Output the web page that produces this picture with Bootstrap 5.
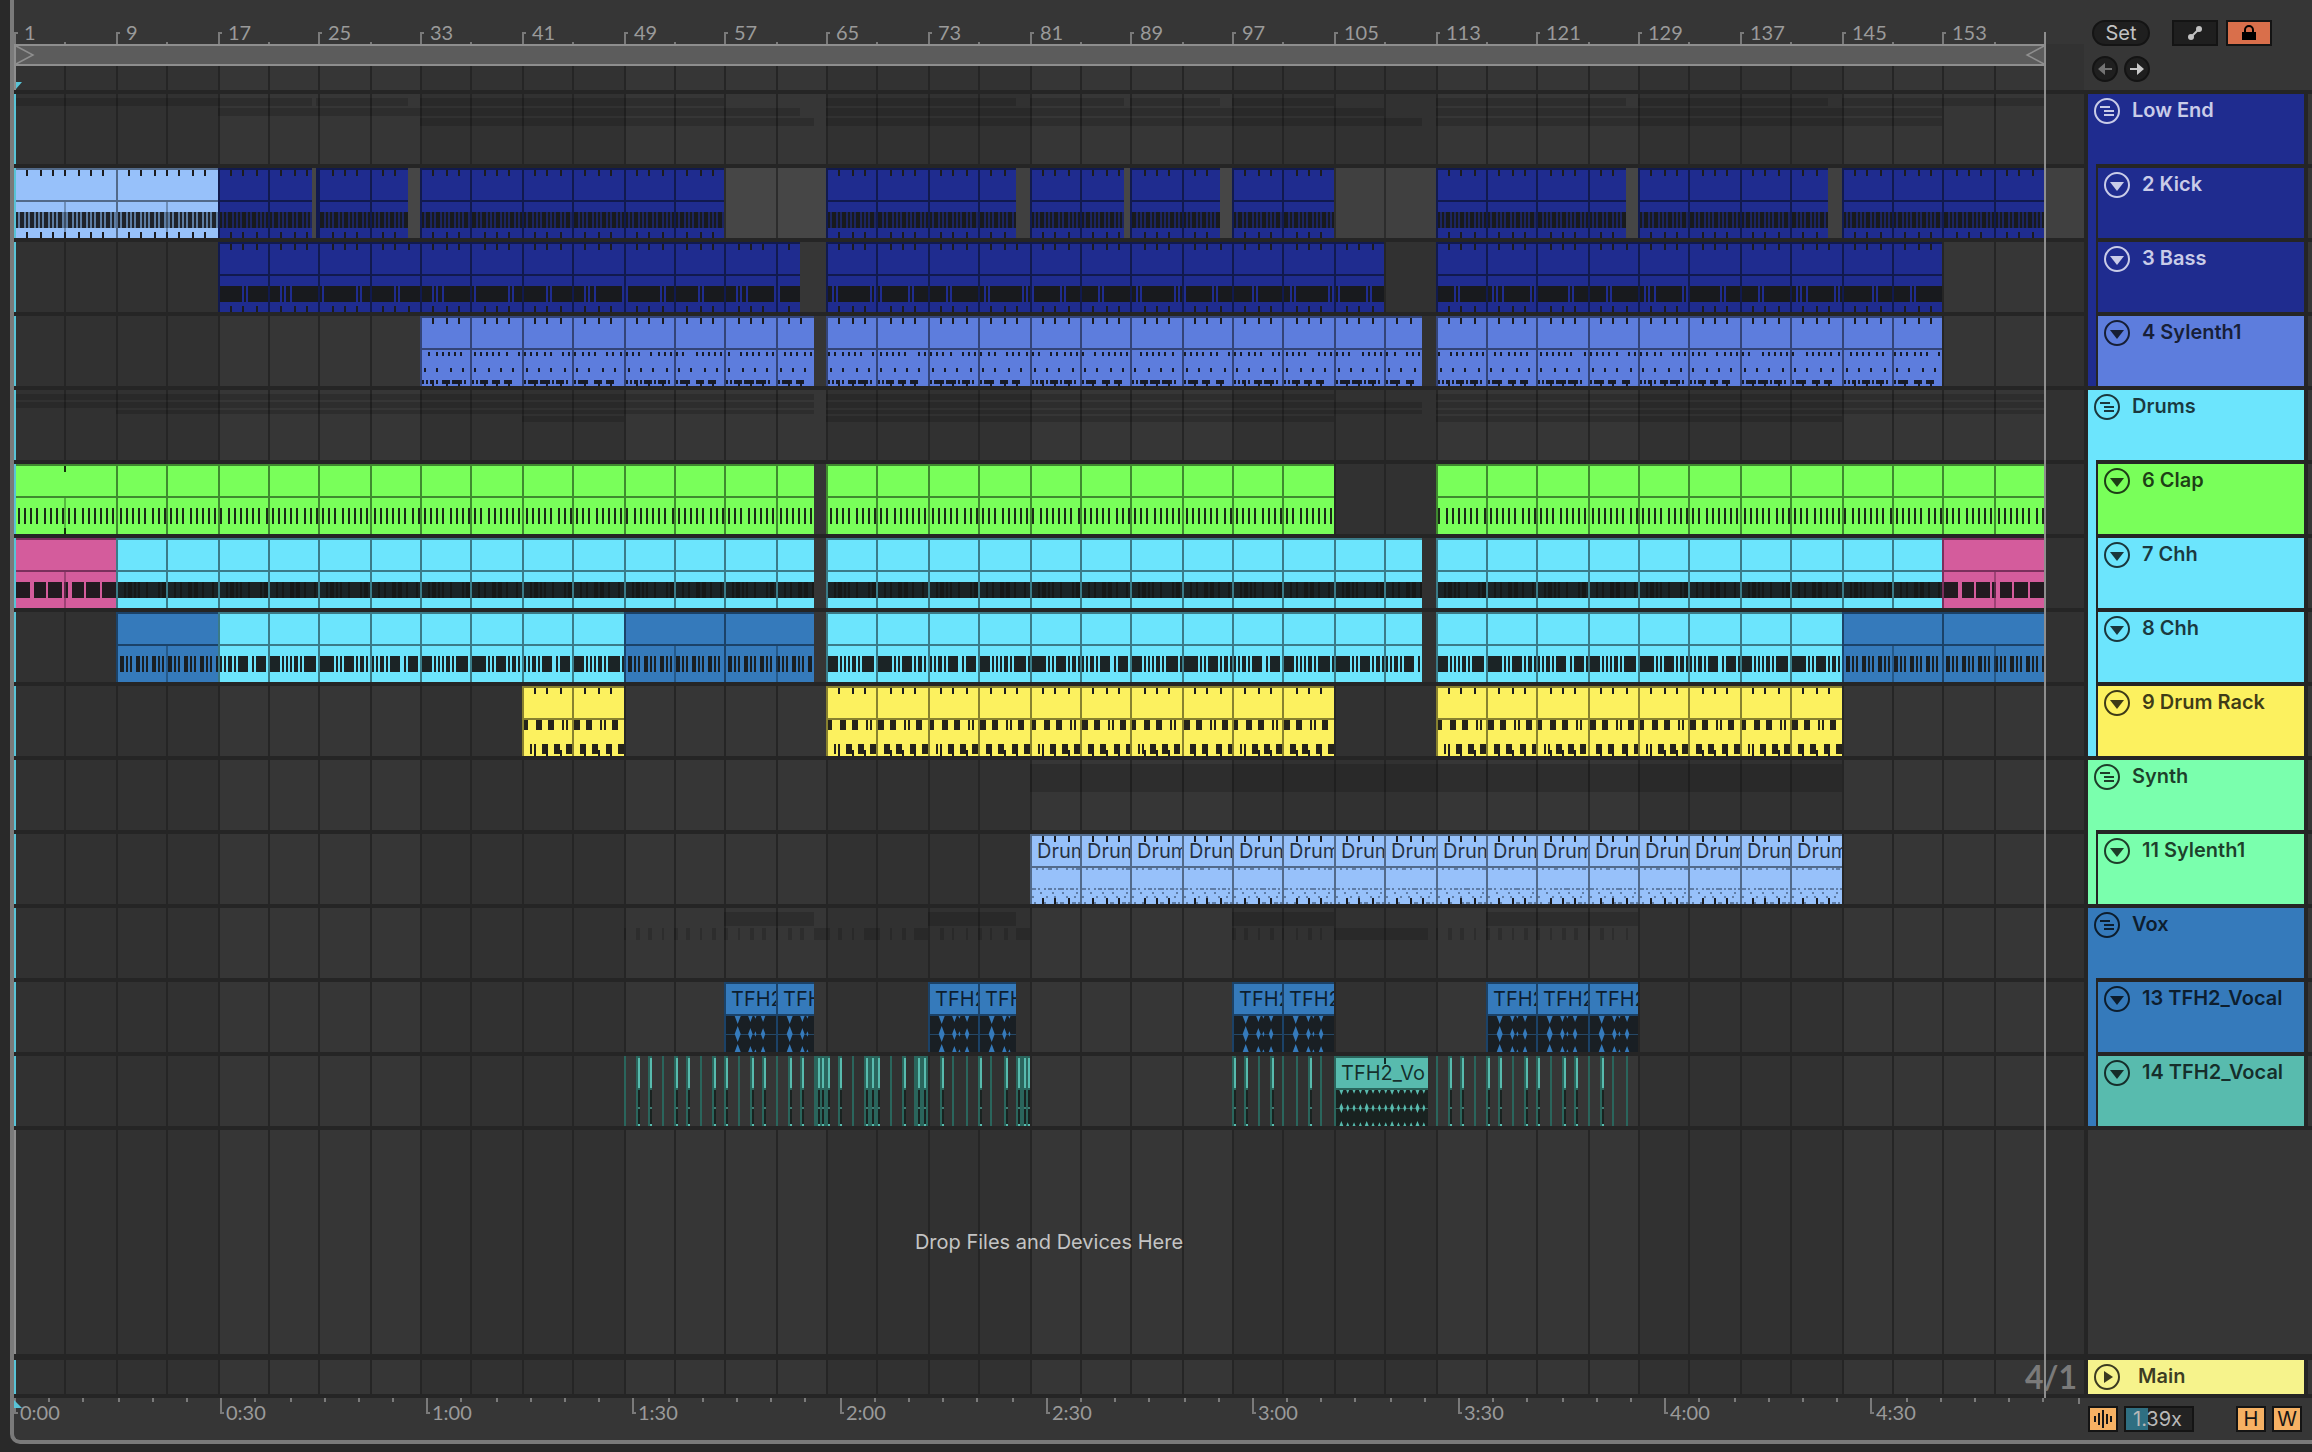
<!DOCTYPE html>
<html lang="en">
<head>
<meta charset="utf-8">
<meta name="viewport" content="width=device-width, initial-scale=1">
<title>Arrangement</title>
<link href="https://cdn.jsdelivr.net/npm/bootstrap@5.3.0/dist/css/bootstrap.min.css" rel="stylesheet">
<style>
  :root { --line:#252525; --panel:#363636; --edge:#7a7a7a; --cyan:#58c3d6; }
  body { background:#292929; color:#9a9a9a; font:400 20px/24px Inter, "Open Sans", sans-serif; }
  svg { display:block; }
  .frame { margin:0 0 8px 10px; min-height:calc(100vh - 8px); border-left:4px solid var(--edge); border-bottom:4px solid var(--edge); border-bottom-left-radius:10px; background:var(--panel); }
  .side { width:228px; flex:none; }
  .topbar { height:90px; }
  .topright { padding-right:40px; }
  .arrows { gap:6px; margin-top:10px; }
  .lane svg, .ruler svg { width:100%; height:100%; }
  .lane { height:70px; margin-bottom:4px; overflow:hidden; }
  .tracks { background:var(--line); padding-top:4px; }
  .lanes { min-width:0; }
  .drop { min-height:120px; background:var(--line); }
  .dropside { background:var(--panel); border-left:4px solid var(--line); }
  .drop-hint { inset:0 228px 0 0; color:#c4c4c4; }
  .cliptext { top:5px; height:24px; overflow:hidden; white-space:nowrap; padding-left:5px; }
  .rulertext, .timetext { font-family:Lato, sans-serif; }
  .rulertext { top:20px; }
  .timetext { top:2px; }
  .group-fill { margin-bottom:4px; }
  .head { height:70px; padding:4px; gap:12px; font-weight:600; }
  .kids { margin-left:8px; padding:4px 0 0 2px; background:var(--line); display:flex; flex-direction:column; gap:4px; }
  .heads { padding-left:4px; }
  .strip { width:8px; border-left:4px solid var(--line); background:repeating-linear-gradient(var(--panel) 0 70px, var(--line) 70px 74px); }
  .fold { width:26px; height:26px; padding:0; border:0; background:none; color:inherit; flex:none; margin-left:2px; }
  .on-dark { color:#c9cce8; } .on-light { color:rgba(0,0,0,.76); }
  .c-navy { background:#1f2c8f; } .c-peri { background:#5d7ddd; } .c-cyan { background:#6ce5fd; } .c-green { background:#79ff5a; }
  .c-yellow { background:#fcf15f; } .c-mint { background:#7affad; } .c-blue { background:#357abb; } .c-teal { background:#58bbae; } .c-main { background:#f6f38c; }
  .tool { height:26px; padding:0; border:2px solid #141414; background:#1f1f1f; color:#c2c2c2; display:flex; align-items:center; justify-content:center; line-height:20px; }
  .tool-set { width:58px; border-radius:13px; }
  .tool-wide { width:46px; } .tool-round { width:26px; border-radius:13px; } .tool-sq { width:30px; }
  .tool-lock { background:#d96f4b; color:#000; } .tool-on { background:#f6b163; color:#161616; }
  .zoomval { width:70px; height:26px; margin-left:6px; padding:0 0 0 7px; border:2px solid #141414; border-radius:0; color:#b8b8b8; line-height:20px; background:linear-gradient(90deg,#2f6f82 22px,#232323 22px); }
  .tool-last { margin:0 10px 0 6px; }
  .mainwrap { background:var(--line); padding:6px 0 4px; }
  .mainrow { height:34px; }
  .signature { right:7px; top:3px; font:700 32px/28px Lato, sans-serif; color:#7a7a7a; }
  .head-main { height:34px; gap:18px; }
  .timebar { height:42px; }
  .endline { width:2px; right:266px; top:32px; bottom:42px; background:#8e8e8e; }
</style>
</head>
<body>
<main class="frame d-flex flex-column position-relative">
  <header class="topbar d-flex">
    <div class="ruler flex-fill position-relative" id="ruler"></div>
    <div class="side ps-2 pt-1">
      <div class="d-flex mt-3 topright">
        <button class="tool tool-set">Set</button>
        <button class="tool tool-wide ms-auto" aria-label="Automation mode"><svg width="16" height="16" viewBox="0 0 16 16"><path d="M3 13 13 3" stroke="currentColor" stroke-width="2"/><circle cx="4" cy="12" r="3" fill="currentColor"/><circle cx="12" cy="4" r="3" fill="currentColor"/></svg></button>
        <button class="tool tool-wide tool-lock ms-2" aria-label="Lock envelopes"><svg width="14" height="16" viewBox="0 0 14 16"><path d="M3 8V5a4 4 0 0 1 8 0v3" fill="none" stroke="#000" stroke-width="2"/><path d="M0 7h14v8H0z"/></svg></button>
      </div>
      <div class="d-flex arrows">
        <button class="tool tool-round" aria-label="Previous locator"><svg width="16" height="14" viewBox="0 0 16 14"><path d="M1 7 8 1v5h7v2H8v5z" fill="#737373"/></svg></button>
        <button class="tool tool-round" aria-label="Next locator"><svg width="16" height="14" viewBox="0 0 16 14"><path d="M15 7 8 1v5H1v2h7v5z" fill="#c8c8c8"/></svg></button>
      </div>
    </div>
  </header>

  <section class="tracks d-flex">
    <div class="lanes flex-fill" id="lanes"></div>
    <div class="side heads d-flex">
      <div class="flex-fill" id="heads"></div>
      <div class="strip"></div>
    </div>
  </section>

  <section class="drop d-flex flex-fill position-relative">
    <div class="flex-fill position-relative lanes" id="drop"></div>
    <div class="side dropside"></div>
    <div class="drop-hint position-absolute d-flex align-items-center justify-content-center">Drop Files and Devices Here</div>
  </section>

  <section class="d-flex mainwrap">
    <div class="mainrow flex-fill position-relative lanes" id="mainlane"></div>
    <div class="side heads d-flex mainrow">
      <div class="head head-main flex-fill d-flex c-main on-light">
        <button class="fold" aria-label="Unfold main track"><svg width="26" height="26" viewBox="0 0 26 26"><circle cx="13" cy="13" r="12" fill="none" stroke="currentColor" stroke-width="2"/><path d="M10 7v12l9-6z" fill="currentColor"/></svg></button>
        <span>Main</span>
      </div>
      <div class="strip"></div>
    </div>
  </section>

  <footer class="timebar d-flex">
    <div class="ruler flex-fill position-relative" id="times"></div>
    <div class="side heads d-flex pt-2">
      <button class="tool tool-sq tool-on" aria-label="Show waveform"><svg width="20" height="20" viewBox="0 0 20 20"><path d="M2 7v6M6 4v12M10 1v18M14 5v10M18 7v6" stroke="#161616" stroke-width="2"/></svg></button>
      <input class="zoomval" type="text" value="1.39x" aria-label="Zoom">
      <button class="tool tool-sq tool-on ms-auto">H</button>
      <button class="tool tool-sq tool-on tool-last">W</button>
    </div>
  </footer>
  <div class="position-absolute endline"></div>
</main>
<script src="https://cdn.jsdelivr.net/npm/bootstrap@5.3.0/dist/js/bootstrap.bundle.min.js"></script>
<script>
const BARS = 160, TAIL = 40;
let laneW, barW;
const snap = v => 2 * Math.round(v / 2);
const X = b => snap((b - 1) * barW);
const R = (x, y, w, h, f, o) => `<rect x="${x}" y="${y}" width="${w}" height="${h}" fill="${f}"${o ? ` opacity="${o}"` : ''}/>`;
const svg = s => `<svg shape-rendering="crispEdges" aria-hidden="true">${s}</svg>`;

// fill, border, note
const C = {
  sky:['#97c1fa','#526a8a','#1f242c'], navy:['#1f2c8f','#111a4e','#181a1e'], peri:['#5d7ddd','#334478','#181c28'],
  green:['#79ff5a','#3f8a2f','#1b2a17'], cyan:['#6ce5fd','#3a7b88','#1b2426'], pink:['#d45c9c','#7a2f5c','#221a20'],
  blue:['#357abb','#1b4268','#191f24'], yellow:['#fcf15f','#88812f','#25231a'], teal:['#58bbae','#2a655c','#192220']
};
// consecutive clips of a fixed length between two bars
const run = (from, to, step, c, label) => {
  const out = [];
  for (let b = from; b < to; b += step) out.push({ a:b, b:Math.min(b + step, to), c, label });
  return out;
};

// vocal chops, one letter per bar: d = hairline, p = short slice, A-D = clusters
const chops = (s, from) => [...s].map((k, i) => ({ k, a: from + i })).filter(t => t.k !== '.');
const BLOCK = { A:[16,[4,8,14]], B:[16,[2,8,14]], C:[14,[4,10]], D:[14,[2,8,12]] };
const CHOPS = [...chops('dppdppdppdppdppA.pdB.dpC.pddpdpD', 49), ...chops('ppdpddpd', 97), ...chops('dppdppdppdppdpdd', 113)];

const GROUPS = [
  { name:'Low End', cls:'c-navy on-dark', rows:[[4,8],[14,8],[24,8]], kids:[
    { name:'2 Kick', cls:'c-navy on-dark', kind:'kick', hot:true, ticks:3, clips:[...run(1,17,8,'sky'), ...run(17,24.5,4,'navy'), {a:24.85,b:25,c:'navy'}, ...run(25,32,4,'navy'), ...run(33,57,4,'navy'), ...run(65,80,4,'navy'), ...run(81,88.5,4,'navy'), ...run(89,96,4,'navy'), ...run(97,105,4,'navy'), ...run(113,128,4,'navy'), ...run(129,144,4,'navy'), ...run(145,161,4,'navy')] },
    { name:'3 Bass', cls:'c-navy on-dark', kind:'bass', ticks:3, clips:[...run(17,63,4,'navy'), ...run(65,109,4,'navy'), ...run(113,153,4,'navy')] },
    { name:'4 Sylenth1', cls:'c-peri on-light', kind:'arp', ticks:1, clips:[...run(33,64,4,'peri'), ...run(65,112,4,'peri'), ...run(113,153,4,'peri')] } ] },
  { name:'Drums', cls:'c-cyan on-light', rows:[[4,6],[12,6],[20,4],[26,6]], kids:[
    { name:'6 Clap', cls:'c-green on-light', kind:'clap', clips:[...run(1,9,8,'green'), ...run(9,64,4,'green'), ...run(65,105,4,'green'), ...run(113,161,4,'green')] },
    { name:'7 Chh', cls:'c-cyan on-light', kind:'hat', clips:[...run(1,9,8,'pink'), ...run(9,64,4,'cyan'), ...run(65,112,4,'cyan'), ...run(113,153,4,'cyan'), ...run(153,161,8,'pink')] },
    { name:'8 Chh', cls:'c-cyan on-light', kind:'hat2', clips:[...run(9,17,8,'blue'), ...run(17,49,4,'cyan'), ...run(49,64,8,'blue'), ...run(65,112,4,'cyan'), ...run(113,145,4,'cyan'), ...run(145,161,8,'blue')] },
    { name:'9 Drum Rack', cls:'c-yellow on-light', kind:'rack', ticks:1, clips:[...run(41,49,4,'yellow'), ...run(65,105,4,'yellow'), ...run(113,145,4,'yellow')] } ] },
  { name:'Synth', cls:'c-mint on-light', rows:[[4,28]], kids:[
    { name:'11 Sylenth1', cls:'c-mint on-light', kind:'pad', ticks:3, clips:run(81,145,4,'sky','Drum') } ] },
  { name:'Vox', cls:'c-blue on-light', rows:[[4,14],[20,12]], kids:[
    { name:'13 TFH2_Vocal', cls:'c-blue on-light', kind:'vox', clips:[...run(57,64,4,'blue','TFH2'), ...run(73,80,4,'blue','TFH2'), ...run(97,105,4,'blue','TFH2'), ...run(117,129,4,'blue','TFH2')] },
    { name:'14 TFH2_Vocal', cls:'c-teal on-light', kind:'vox2', clips:[{a:105,b:112.45,c:'teal',label:'TFH2_Vo'}], chops:CHOPS } ] }
];

function grid(h, hot) {
  const dark = hot ? '#404040' : '#313131', light = hot ? '#464646' : '#363636';
  let s = R(0, 0, '100%', h, dark);
  for (let b = 17; b < BARS; b += 32) s += R(X(b), 0, X(b + 16) - X(b), h, light);
  for (let b = 5; b <= BARS; b += 4) s += R(X(b), 0, 2, h, hot ? '#2c2c2c' : '#252525');
  return s;
}
// one character per two-pixel column, repeated to the clip's end
function cols(pat, x0, x1, y, h, f) {
  let s = '';
  for (let x = x0, i = 0; x < x1; i++) {
    const k = pat[i % pat.length] === '1'; let e = x + 2, j = i;
    while (k && e < x1 && pat[(j + 1) % pat.length] === '1') { e += 2; j++; }
    if (k) s += R(x, y, e - x, h, f);
    x = e; i = j;
  }
  return s;
}
// gaps between the two channels' peaks
function diamonds(at, x0, x1, f, w, hh) {
  let d = '';
  at.forEach(([x, k]) => {
    const a = w * k, q = hh * k;
    if (x + a < x1 && x - a > x0) d += `M${x - a} 52l${a}-${q} ${a} ${q}-${a} ${q}zM${x - a} 34h${2 * a}l-${a} ${q}zM${x - a} 70h${2 * a}l-${a}-${q}z`;
  });
  return `<path d="${d}" fill="${f}" shape-rendering="auto"/>`;
}
function notes(kind, c, x0, x1, clip, n) {
  const [fill, edge, ink] = C[c]; let s = '';
  if (kind === 'kick') {
    s += R(x0, 44, x1 - x0, 16, ink);
    for (let k = 1; ; k++) { const x = snap((clip.a - 1) * barW + k * barW * 3 / 8); if (x >= x1) break; s += R(x, 44, 2, 16, c === 'sky' ? '#5d7da3' : '#1c2560'); }
  } else if (kind === 'bass') {
    s += R(x0, 44, x1 - x0, 16, ink);
    const base = clip.a < 65 ? 18.97 : clip.a < 113 ? 65.5 : 114.5;
    for (let b = base, i = 0; b < 153; b += 3, i++) [0, 4, i % 4 === 1 ? 10 : 0].forEach(o => { const x = X(b) + o; if (x >= x0 && x < x1 - 1) s += R(x, 44, 2, 16, fill); });
  } else if (kind === 'arp') {
    for (let k = 0; k < 8; k++) { const x = snap((clip.a - 1 + k / 2 + .2) * barW); if (x < x1 && (k + n) % 7) s += R(x, 36, 2, 4, ink); }
    for (let k = 0; k < 4; k++) {
      const x = X(clip.a + k);
      if (x + 6 < x1) s += R(x + 4, 52, 2, 4, ink);
      if (k && x + 4 < x1) s += (k === 1 && n % 4 === 0) ? R(x - 6, 64, 2, 4, ink) + R(x - 2, 64, 4, 4, ink) + R(x + 4, 64, 2, 4, ink) : R(x - 4, 64, 8, 4, ink) + (n % 2 ? '' : R(x + 6, 64, 2, 4, ink));
      else if (!k) s += R(x + 2, 64, 2, 4, ink) + R(x + 6, 64, 2, 4, ink);
      if (k && x < x1) s += R(x, 66, 2, 4, ink);
    }
  } else if (kind === 'clap') {
    for (let k = 0; k < 8 * 2; k++) { const x = snap((clip.a - 1 + k / 2 + .3) * barW); if (x < x1) s += R(x, 44, 2, 16, ink); }
  } else if (kind === 'hat') {
    if (c === 'pink') s += cols('1111111001111110111111101100111111011111110111111', x0, x1, 44, 16, ink);
    else s += R(x0, 44, x1 - x0, 16, ink);
    if (c !== 'pink') s += cols(n % 2 ? '00010110101000100' : '0001001000110110010', x0, x1, 44, 16, '#161817');
  } else if (kind === 'hat2') {
    s += cols(c === 'blue' ? '01101010' : n % 3 === 1 ? '1010110101111100101111101' : n % 3 === 2 ? '1111101010101101011111101' : '1111111010101111101011010', x0, x1, 44, 16, ink);
  } else if (kind === 'rack') {
    s += cols(n % 2 ? '1110001110000101000111000' : '1100001110001110000101000', x0, x1, 34, 10, ink);
    s += cols(n % 2 ? '0001110001110000111000111' : '0001010001110001110001110', x0, x1, 58, 10, ink);
  } else if (kind === 'pad') {
    const p = '#5f7da6';
    s += cols('0010010011001000010010110', x0, x1, 34, 2, p) + cols('1101001011010111010110101', x0, x1, 54, 2, p)
       + cols('0000100000100001000000100', x0, x1, 58, 2, p) + cols('1000000100010000010001000', x0, x1, 62, 2, p) + cols('0100011000001011000011010', x0, x1, 68, 2, p);
  } else if (kind === 'vox' || kind === 'vox2') {
    s += R(x0, 34, x1 - x0, 36, ink) + R(x0, 52, x1 - x0, 1, fill, .45);
    const at = [], step = kind === 'vox' ? barW : barW / 2;
    for (let x = x0 + step - 1, i = 0; x < x1; x += step, i++) { at.push([x, i % 4 ? .75 : 1]); if (kind === 'vox' && i % 4 === 1) at.push([x + 5, .35]); }
    s += diamonds(at, x0, x1, fill, kind === 'vox' ? 3 : 2, kind === 'vox' ? 8 : 5);
  }
  return s;
}
function lane(t) {
  let s = grid(70, t.hot), txt = '';
  t.clips.forEach((clip, n) => {
    const [fill, edge, ink] = C[clip.c], l = X(clip.a), r = X(clip.b), x0 = l + 2;
    s += R(l, 0, r - l, 70, fill);
    s += notes(t.kind, clip.c, x0, r, clip, n);
    s += R(l, 0, 2, 70, edge) + R(l, 0, r - l, 2, edge) + R(l, 32, r - l, 2, edge);
    if (clip.b - clip.a > 4 && t.kind !== 'vox2') s += R(X(clip.a + 4), 34, 2, 36, edge, .6);
    for (let b = clip.a + 1; t.ticks && X(b) < r - 1; b++) {
      s += R(X(b), 2, 2, 6, '#1c1c1f');
      if (t.ticks === 3 || t.kind === 'rack') s += R(X(b), 64, 2, 6, '#1c1c1f');
    }
    if (t.kind === 'clap' && clip.a === 1) s += R(X(5), 2, 2, 6, '#14300c') + R(X(5), 64, 2, 6, '#14300c');
    if (t.kind === 'vox2') s += R(X(109), 2, 2, 6, '#132a27');
    if (clip.label) txt += `<span class="cliptext position-absolute on-light" style="left:${x0}px;width:${r - x0}px">${clip.label}</span>`;
  });
  (t.chops || []).forEach(p => {
    const x = X(p.a), [fill, edge, ink] = C.teal;
    if (p.k === 'd') s += R(x, 0, 2, 70, edge);
    else {
      const [w, on] = p.k === 'p' ? [4, [2]] : BLOCK[p.k];
      s += R(x, 0, w, 70, edge);
      on.forEach(o => s += R(x + o, 2, 2, 30, fill) + R(x + o, 34, 2, 34, ink) + R(x + o, 51, 2, 2, fill, .6) + R(x + o, 68, 2, 2, fill));
    }
  });
  return `<div class="lane position-relative">${svg(s + cursor(70))}${txt}</div>`;
}
function overview(g) {
  let s = grid(70);
  const shade = 'rgba(0,0,0,.16)';
  g.kids.forEach((t, i) => {
    const [y, h] = g.rows[i];
    t.clips.forEach(c => s += R(X(c.a), y, X(c.b) - X(c.a), h, shade));
    (t.chops || []).forEach(p => s += R(X(p.a), y, p.k === 'd' ? 2 : p.k === 'p' ? 4 : BLOCK[p.k][0], h, shade));
  });
  return `<div class="lane">${svg(s + cursor(70))}</div>`;
}
const foldIcon = kid => `<button class="fold" aria-label="Fold"><svg width="26" height="26" viewBox="0 0 26 26"><circle cx="13" cy="13" r="12" fill="none" stroke="currentColor" stroke-width="2"/>${kid ? '<path d="M6 10h14l-7 9z" fill="currentColor"/>' : '<path d="M6 9h10M10 13h10M10 17h10" stroke="currentColor" stroke-width="2"/>'}</svg></button>`;
const head = (o, kid) => `<div class="head d-flex ${o.cls}">${foldIcon(kid)}<span>${o.name}</span></div>`;

function cursor(h) { return R(0, 0, 2, h, '#58c3d6'); }
function draw() {
  laneW = document.getElementById('lanes').clientWidth;
  barW = (laneW - TAIL) / BARS;
  document.getElementById('lanes').innerHTML = GROUPS.map(g => overview(g) + g.kids.map(lane).join('')).join('');
  document.getElementById('heads').innerHTML = GROUPS.map(g => `<div class="group-fill ${g.cls.split(' ')[0]}">${head(g)}<div class="kids">${g.kids.map(k => head(k, true)).join('')}</div></div>`).join('');

  // bar ruler with the loop brace and the scrub strip under it
  const end = X(161);
  let s = R(0, 44, '100%', 46, '#323232'), t = '';
  for (let b = 17; b < BARS; b += 32) s += R(X(b), 66, X(b + 16) - X(b), 24, '#363636');
  for (let b = 1; b <= BARS; b += 4) {
    if (b > 1) s += R(X(b), 66, 2, 24, '#252525');
    if ((b - 1) % 8) s += R(X(b), 42, 2, 2, '#7a7a7a');
    else { s += R(X(b), 32, 2, 12, '#7a7a7a') + R(X(b), 32, 4, 2, '#7a7a7a'); t += `<span class="rulertext position-absolute" style="left:${X(b) + 10}px">${b}</span>`; }
  }
  s += R(0, 44, end, 22, '#5c5c5c') + R(0, 44, end, 2, '#8e8e8e') + R(0, 64, end, 2, '#8e8e8e') + R(0, 44, 2, 46, '#8e8e8e');
  s += `<g shape-rendering="auto"><path d="M2 46l17 9-17 9M${end} 46l-17 9 17 9" fill="none" stroke="#8e8e8e" stroke-width="1.5"/><path d="M2 82h6l-6 7z" fill="#58c3d6"/></g>`;
  document.getElementById('ruler').innerHTML = svg(s) + t;

  document.getElementById('drop').innerHTML = `<div class="position-absolute top-0 bottom-0 start-0 end-0 ruler">${svg(grid('100%') + R(0, 0, 2, '100%', '#8e8e8e'))}</div>`;
  document.getElementById('mainlane').innerHTML = `<div class="ruler h-100">${svg(grid(34) + cursor(34))}</div><span class="signature position-absolute">4/1</span>`;

  // seconds ruler
  const sec = (laneW - 7) / 300; s = ''; t = '';
  for (let q = 0; q <= 300; q += 5) {
    const x = snap(q * sec);
    if (q % 30) s += R(x, 0, 2, 4, '#7a7a7a');
    else if (q < 300) {
      s += R(x, 0, 2, 16, '#7a7a7a') + R(x, 14, 4, 2, '#7a7a7a');
      t += `<span class="timetext position-absolute" style="left:${x + 6}px">${Math.floor(q / 60)}:${String(q % 60).padStart(2, '0')}</span>`;
    } else s += R(x, 0, 2, 6, '#7a7a7a');
  }
  s += '<path d="M0 2v8h8z" fill="#58c3d6" shape-rendering="auto"/>';
  document.getElementById('times').innerHTML = svg(s) + t;
}
draw();
addEventListener('resize', draw);
</script>
</body>
</html>
